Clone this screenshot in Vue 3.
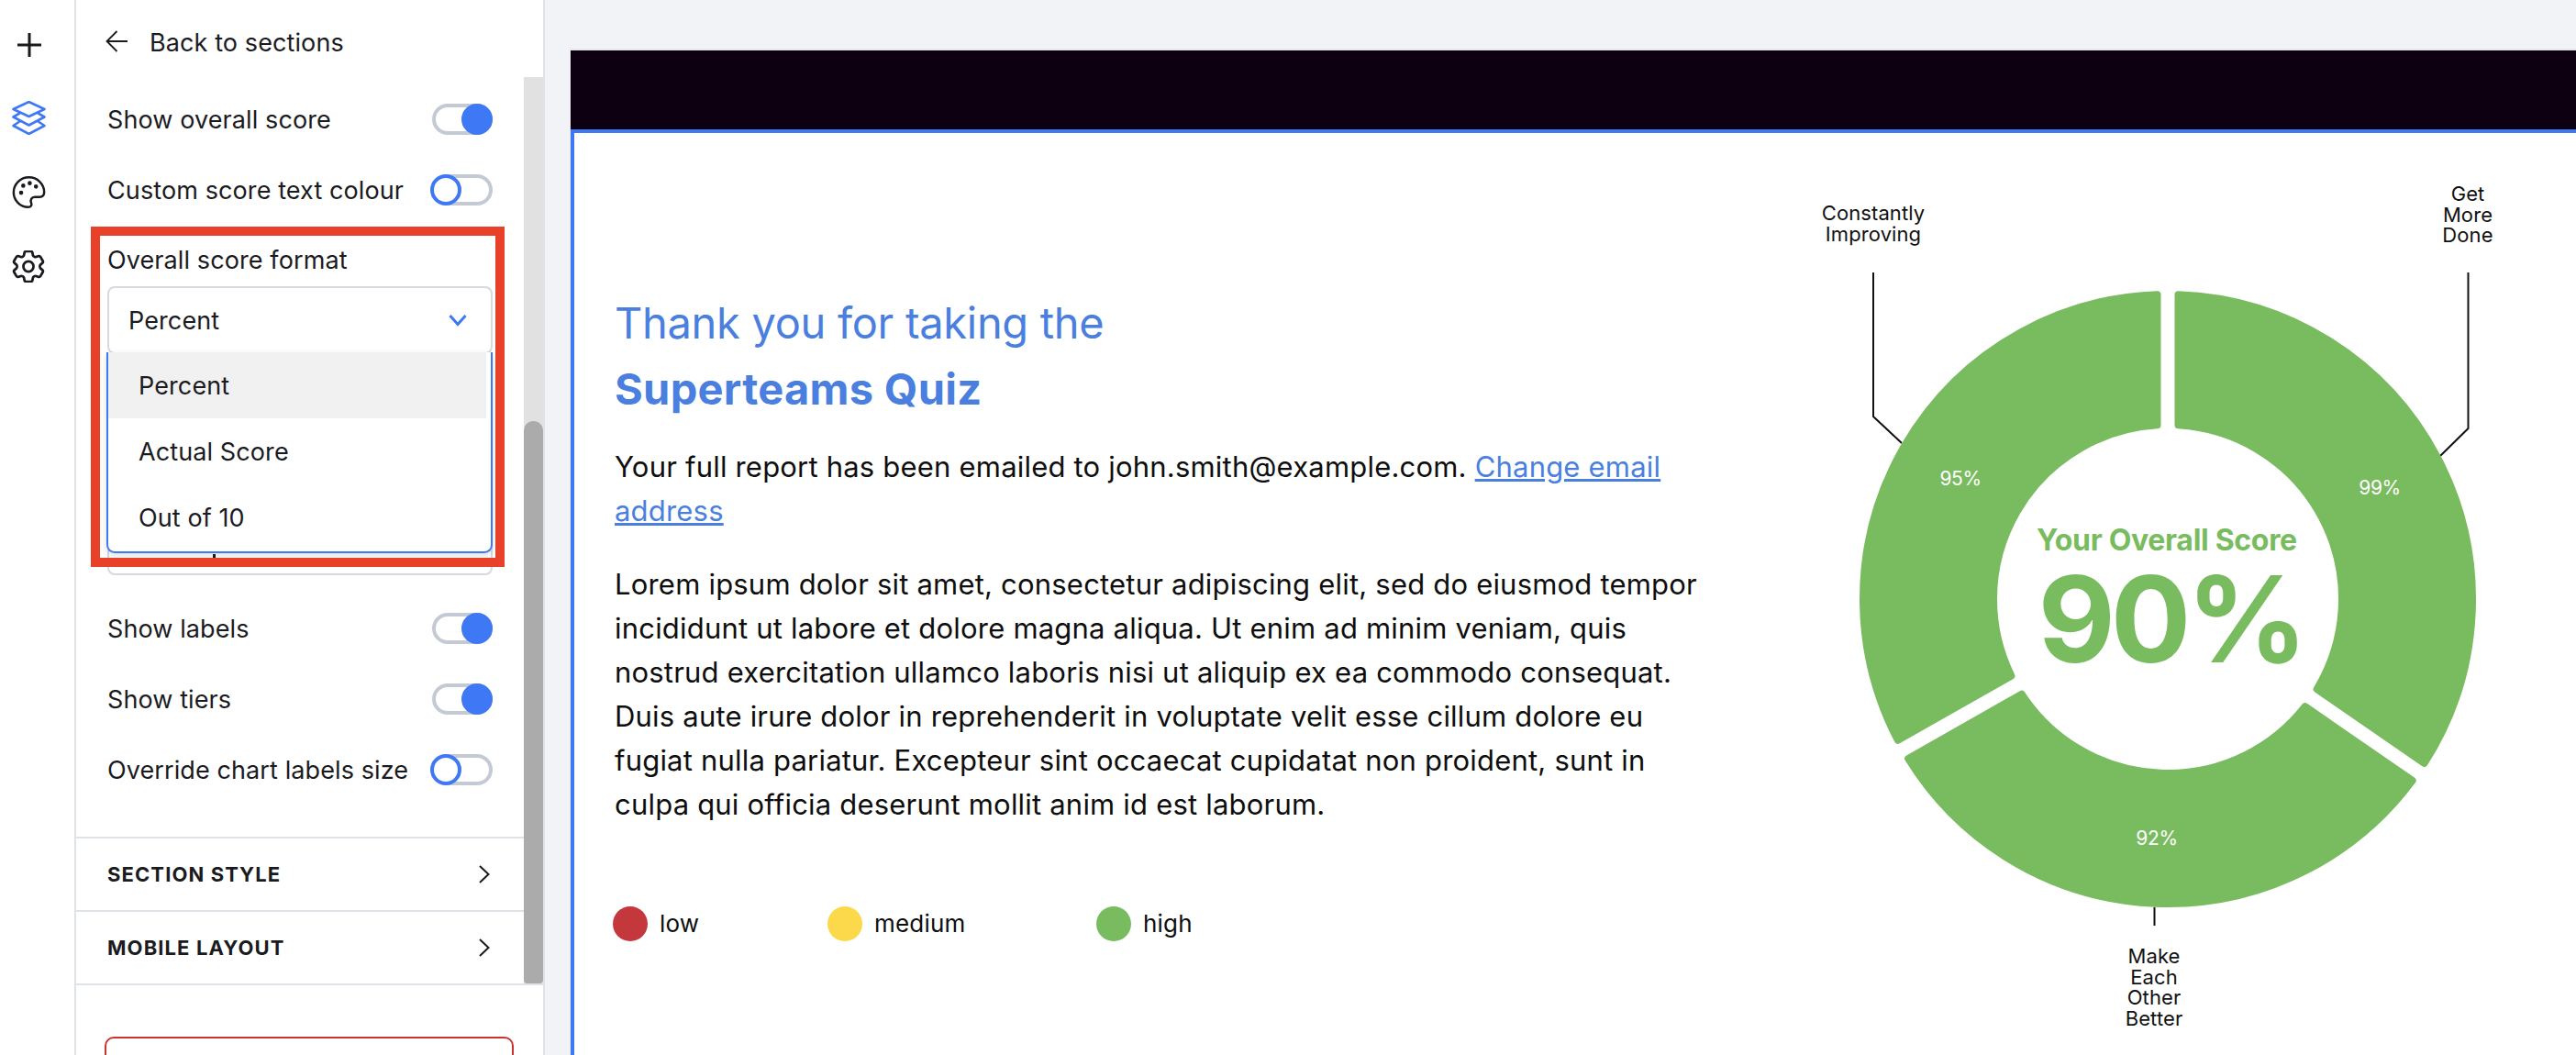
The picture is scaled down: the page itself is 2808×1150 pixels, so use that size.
<script setup>
const R = 336, r = 186, cx = 2363 - 1990, cy = 653 - 280, cr = 4, gap = 7.5
const rad = (d) => ((d - 90) * Math.PI) / 180
const pt = (rr, a) => `${(cx + rr * Math.cos(rad(a))).toFixed(2)} ${(cy + rr * Math.sin(rad(a))).toFixed(2)}`
const deg = (x) => (x * 180) / Math.PI
function sector(a0, a1) {
  const ro = R - cr, ri = r + cr, d = gap + cr
  const dO = deg(Math.asin(d / ro)), dI = deg(Math.asin(d / ri))
  const large = a1 - a0 - 2 * dO > 180 ? 1 : 0
  return `M${pt(ro, a0 + dO)} A${ro} ${ro} 0 ${large} 1 ${pt(ro, a1 - dO)} L${pt(ri, a1 - dI)} A${ri} ${ri} 0 ${large} 0 ${pt(ri, a0 + dI)} Z`
}
const sectors = [sector(0, 124.6), sector(124.6, 240.4), sector(240.4, 360)]
const values = [
  { t: '95%', x: 2137 - 1990, y: 521 - 280 },
  { t: '99%', x: 2594 - 1990, y: 531 - 280 },
  { t: '92%', x: 2351 - 1990, y: 913 - 280 },
]
const leaders = ['M52 17V174L83 203', 'M700.5 17V187L670 217', 'M358.5 709V729']
const callouts = [
  { x: 52, lines: ['Constantly', 'Improving'], y: -40 },
  { x: 700, lines: ['Get', 'More', 'Done'], y: -61 },
  { x: 358, lines: ['Make', 'Each', 'Other', 'Better'], y: 770 },
]
const toggles1 = [
  { label: 'Show overall score', on: true },
  { label: 'Custom score text colour', on: false },
]
const toggles2 = [
  { label: 'Show labels', on: true },
  { label: 'Show tiers', on: true },
  { label: 'Override chart labels size', on: false },
]
const legend = [
  { label: 'low', color: '#c4373c', w: 234 },
  { label: 'medium', color: '#fbd94b', w: 293 },
  { label: 'high', color: '#79bc60', w: 0 },
]
</script>

<template>
  <div class="app">
    <nav class="rail">
      <svg class="ic-plus" viewBox="0 0 28 28" width="28" height="28"><path d="M14 1V27M1 14H27" fill="none" stroke="#1b1b1f" stroke-width="3" /></svg>
      <svg class="ic-layers" viewBox="0 0 37 37" width="37" height="37" fill="none" stroke="#3f78f4" stroke-width="2.6" stroke-linejoin="round">
        <path d="M18.5 1L35.5 9L18.5 17L1.5 9Z" />
        <path d="M9 13.2L1.5 17.5L18.5 26.5L35.5 17.5L28 13.2" />
        <path d="M9 22L1.5 27L18.5 36L35.5 27L28 22" />
      </svg>
      <svg class="ic-palette" viewBox="0 0 24 24" width="37" height="37" fill="none" stroke="#1b1b1f" stroke-width="1.6" stroke-linecap="round" stroke-linejoin="round">
        <path d="M12 1.5C6 1.5 1.2 6.3 1.2 12.2C1.2 18 6 22.6 11.4 22.6C13.6 22.6 14.3 21 13.6 19.4C12.8 17.6 13.8 15.4 16.2 15.4H19.6C21.6 15.4 22.8 14 22.8 12C22.8 6.2 18 1.5 12 1.5Z" />
        <circle cx="6.5" cy="12.4" r=".7" fill="#1b1b1f" /><circle cx="8" cy="7.4" r=".7" fill="#1b1b1f" /><circle cx="12.6" cy="5.6" r=".7" fill="#1b1b1f" /><circle cx="17" cy="8" r=".7" fill="#1b1b1f" />
      </svg>
      <svg class="ic-gear" viewBox="2.3 2.5 19.4 19" width="36" height="35" fill="none" stroke="#1b1b1f" stroke-width="1.5" stroke-linecap="round" stroke-linejoin="round">
        <path d="M9.594 3.94c.09-.542.56-.94 1.11-.94h2.593c.55 0 1.02.398 1.11.94l.213 1.281c.063.374.313.686.645.87.074.04.147.083.22.127.325.196.72.257 1.075.124l1.217-.456a1.125 1.125 0 0 1 1.37.49l1.296 2.247a1.125 1.125 0 0 1-.26 1.431l-1.003.827c-.293.241-.438.613-.43.992a7.723 7.723 0 0 1 0 .255c-.008.378.137.75.43.991l1.004.827c.424.35.534.955.26 1.43l-1.298 2.247a1.125 1.125 0 0 1-1.369.491l-1.217-.456c-.355-.133-.75-.072-1.076.124a6.47 6.47 0 0 1-.22.128c-.331.183-.581.495-.644.869l-.213 1.281c-.09.543-.56.94-1.11.94h-2.594c-.55 0-1.019-.398-1.11-.94l-.213-1.281c-.062-.374-.312-.686-.644-.87a6.52 6.52 0 0 1-.22-.127c-.325-.196-.72-.257-1.076-.124l-1.217.456a1.125 1.125 0 0 1-1.369-.49l-1.297-2.247a1.125 1.125 0 0 1 .26-1.431l1.004-.827c.292-.24.437-.613.43-.991a6.932 6.932 0 0 1 0-.255c.007-.38-.138-.751-.43-.992l-1.004-.827a1.125 1.125 0 0 1-.26-1.43l1.297-2.247a1.125 1.125 0 0 1 1.37-.491l1.216.456c.356.133.751.072 1.076-.124.072-.044.146-.086.22-.128.332-.183.582-.495.644-.869l.214-1.28Z" />
        <path d="M15 12a3 3 0 1 1-6 0 3 3 0 0 1 6 0Z" />
      </svg>
    </nav>

    <aside class="panel">
      <header class="back">
        <svg viewBox="0 0 24 24" width="24" height="24" fill="none" stroke="#1b1b1f" stroke-width="1.8"><path d="M24 12H2M12.5 1L1.5 12L12.5 23" /></svg>
        <span>Back to sections</span>
      </header>

      <div class="scroll">
        <div class="scroll-body">
          <div class="fields">
            <div v-for="t in toggles1" :key="t.label" class="row">
              <span>{{ t.label }}</span>
              <i class="toggle" :class="{ on: t.on }"></i>
            </div>
            <div class="row"><span>Overall score format</span></div>
            <div class="select">
              <span>Percent</span>
              <svg viewBox="0 0 20 14" width="20" height="14" fill="none" stroke="#3f78f4" stroke-width="3"><path d="M1.5 2L10 11.5L18.5 2" /></svg>
            </div>
            <div class="row hidden-row"><span></span><i class="toggle on"></i></div>
            <div class="select lower"><i class="tick"></i></div>
            <div v-for="t in toggles2" :key="t.label" class="row">
              <span>{{ t.label }}</span>
              <i class="toggle" :class="{ on: t.on }"></i>
            </div>
          </div>
          <div v-for="s in ['SECTION STYLE', 'MOBILE LAYOUT']" :key="s" class="section">
            <span>{{ s }}</span>
            <svg viewBox="0 0 12 20" width="12" height="20" fill="none" stroke="#1b1b1f" stroke-width="2"><path d="M1 1L10.5 10L1 19" /></svg>
          </div>

          <ul class="menu">
            <li class="active">Percent</li>
            <li>Actual Score</li>
            <li>Out of 10</li>
          </ul>
          <div class="annotation"></div>
        </div>
        <div class="track"><div class="thumb"></div></div>
      </div>

      <div class="foot"><div class="danger"></div></div>
    </aside>

    <main class="canvas">
      <div class="stage">
        <div class="topbar"></div>
        <section class="preview">
          <div class="copy">
            <h1>Thank you for taking the<br /><b>Superteams Quiz</b></h1>
            <p>Your full report has been emailed to john.smith@example.com. <a>Change email address</a></p>
            <p>Lorem ipsum dolor sit amet, consectetur adipiscing elit, sed do eiusmod tempor incididunt ut labore et dolore magna aliqua. Ut enim ad minim veniam, quis nostrud exercitation ullamco laboris nisi ut aliquip ex ea commodo consequat. Duis aute irure dolor in reprehenderit in voluptate velit esse cillum dolore eu fugiat nulla pariatur. Excepteur sint occaecat cupidatat non proident, sunt in culpa qui officia deserunt mollit anim id est laborum.</p>
            <div class="legend">
              <div v-for="l in legend" :key="l.label" class="key" :style="{ width: l.w ? l.w + 'px' : 'auto' }">
                <i :style="{ background: l.color }"></i><span>{{ l.label }}</span>
              </div>
            </div>
          </div>
          <svg class="chart" viewBox="0 0 760 1009" width="760" height="1009">
            <path v-for="(d, i) in leaders" :key="i" :d="d" fill="none" stroke="#111" stroke-width="2" />
            <path v-for="(d, i) in sectors" :key="'s' + i" :d="d" fill="#79bc60" stroke="#79bc60" stroke-width="8" stroke-linejoin="round" />
            <text v-for="v in values" :key="v.t" :x="v.x" :y="v.y" class="val" text-anchor="middle" dominant-baseline="central">{{ v.t }}</text>
            <text v-for="c in callouts" :key="c.x" class="callout" text-anchor="middle">
              <tspan v-for="(l, i) in c.lines" :key="l" :x="c.x" :y="c.y + i * 22.5">{{ l }}</tspan>
            </text>
            <text x="372" y="320" class="score-title" text-anchor="middle">Your Overall Score</text>
            <text x="376" y="442" class="score" text-anchor="middle">90%</text>
          </svg>
        </section>
      </div>
    </main>
  </div>
</template>

<style>
html, body { margin: 0; overflow: hidden; background: #f1f3f7; }
</style>

<style scoped>
*, *::after { box-sizing: border-box; }
.app {
  display: flex;
  width: 2808px;
  height: 1150px;
  overflow: hidden;
  font-family: Inter, "Noto Sans", sans-serif;
  color: #1b1b1f;
  background: #f1f3f7;
}
.rail {
  flex: 0 0 83px;
  height: 100%;
  background: #fff;
  border-right: 2px solid #dfe2e7;
  display: flex;
  flex-direction: column;
  align-items: flex-start;
  padding: 35px 0 0 13px;
}
.ic-plus { margin: 0 0 47px 5px; }
.ic-layers { margin-bottom: 44px; }
.ic-palette { margin-bottom: 45px; }
.panel {
  flex: 0 0 511px;
  height: 100%;
  background: #fff;
  border-right: 2px solid #dfe2e7;
  display: flex;
  flex-direction: column;
}
.back {
  flex: 0 0 84px;
  display: flex;
  align-items: flex-start;
  padding: 33px 0 0 32px;
  gap: 24px;
  font-size: 27px;
  letter-spacing: 0.1px;
}
.back span { margin-top: -3px; }
.scroll {
  flex: 0 0 990px;
  display: flex;
  border-bottom: 2px solid #dfe3e8;
}
.scroll-body { position: relative; flex: 0 0 488px; height: 988px; }
.fields { padding: 29px 34px 0 34px; height: 828px; display: flex; flex-direction: column; }
.row {
  flex: 0 0 34px;
  display: flex;
  align-items: center;
  justify-content: space-between;
  margin-bottom: 43px;
  font-size: 27px;
  letter-spacing: 0.1px;
}
.row:nth-child(2) { margin-bottom: 42px; }
.row:nth-child(3) { margin-bottom: 12px; }
.toggle {
  position: relative;
  flex: none;
  width: 66px;
  height: 34px;
  border: 4px solid #c4cad4;
  border-radius: 17px;
  background: #fff;
}
.toggle::after {
  content: "";
  position: absolute;
  top: -4px;
  left: -6px;
  width: 34px;
  height: 34px;
  border-radius: 50%;
  background: #fff;
  border: 4px solid #3f78f4;
}
.toggle.on::after { left: auto; right: -4px; background: #3f78f4; }
.select {
  flex: 0 0 74px;
  display: flex;
  align-items: center;
  justify-content: space-between;
  padding: 0 26px 0 21px;
  border: 2px solid #d6dae0;
  border-radius: 8px;
  font-size: 27px;
  letter-spacing: 0.1px;
}
.hidden-row { margin: 43px 0 90px; }
.lower { margin-bottom: 41px; padding: 0; }
.tick {
  align-self: flex-start;
  width: 3px;
  height: 4px;
  margin: 49px 0 0 113px;
  background: #1b1b1f;
}
.section {
  height: 80px;
  border-top: 2px solid #dfe3e8;
  display: flex;
  align-items: center;
  justify-content: space-between;
  padding: 0 37px 0 34px;
  font-size: 22px;
  font-weight: 700;
  letter-spacing: 1.1px;
}
.menu {
  position: absolute;
  top: 300px;
  left: 33px;
  width: 421px;
  height: 219px;
  margin: 0;
  padding: 0 5px 0 0;
  list-style: none;
  background: #fff;
  border: 2px solid #3f78f4;
  border-top: 0;
  border-radius: 0 0 9px 9px;
  box-shadow: 0 3px 8px rgba(0, 0, 0, .12);
  font-size: 27px;
  letter-spacing: 0.1px;
}
.menu li { height: 72px; display: flex; align-items: center; padding-left: 33px; }
.menu li.active { background: #f1f1f1; }
.annotation {
  position: absolute;
  top: 163px;
  left: 16px;
  width: 451px;
  height: 371px;
  border: 10px solid #e9402a;
  pointer-events: none;
}
.track { flex: 0 0 21px; height: 988px; background: #e1e1e1; padding-top: 375px; }
.thumb { height: 613px; background: #ababab; border-radius: 10px 10px 4px 4px; }
.foot { padding: 56px 0 0 31px; }
.danger { width: 446px; height: 60px; border: 2px solid #c8352f; border-radius: 10px; }

.canvas { flex: 1; min-width: 0; padding: 53px 0 0 27px; }
.stage { width: 2187px; border-top: 2px solid #e6e8ec; border-left: 1px solid #e6e8ec; }
.topbar { height: 86px; background: #0d0010; }
.preview {
  height: 1100px;
  background: #fff;
  border-top: 4px solid #3f78f4;
  border-left: 4px solid #3f78f4;
  display: flex;
  justify-content: space-between;
}
.copy { width: 1240px; padding: 0 0 0 44px; color: #0e0e0e; font-size: 31px; line-height: 48px; letter-spacing: 0.2px; }
h1 {
  margin: 171px 0 0;
  font-size: 47px;
  line-height: 72px;
  font-weight: 400;
  color: #4a7fe0;
  letter-spacing: -0.3px;
}
h1 b { font-weight: 700; letter-spacing: 0.3px; }
p { margin: 25px 0 0; }
p + p { margin-top: 32px; }
a { color: #4a7fe0; text-decoration: underline; }
.legend { display: flex; margin: 82px 0 0 -2px; font-size: 26px; }
.key { display: flex; align-items: center; gap: 13px; }
.key i { width: 38px; height: 38px; border-radius: 50%; }
.chart { flex: none; margin: 135px 58px 0 0; overflow: visible; }
.val { fill: #fff; font-size: 21px; letter-spacing: -0.4px; }
.callout { fill: #111; font-size: 22px; letter-spacing: 0.1px; }
.score-title { fill: #79bc60; font-size: 32px; font-weight: 700; letter-spacing: -0.3px; }
.score { fill: #79bc60; font-size: 130px; font-weight: 700; letter-spacing: -5px; }
</style>
